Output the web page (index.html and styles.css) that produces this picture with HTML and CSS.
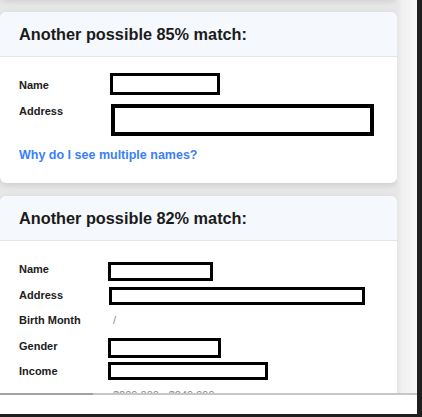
FILE: index.html
```html
<!DOCTYPE html>
<html lang="en">
<head>
<meta charset="utf-8">
<title>Matches</title>
<link rel="stylesheet" href="styles.css">
</head>
<body>
<div class="window">
  <div class="scroll">
    <div class="content">
      <div class="card card-prev"></div>

      <section class="card">
        <header class="card-head"><h2>Another possible 85% match:</h2></header>
        <div class="card-body">
          <div class="row">
            <span class="label">Name</span>
            <span class="value"><span class="redact r1-name"></span></span>
          </div>
          <div class="row">
            <span class="label">Address</span>
            <span class="value"><span class="redact r1-addr"></span></span>
          </div>
          <a class="why" href="#">Why do I see multiple names?</a>
        </div>
      </section>

      <section class="card">
        <header class="card-head"><h2>Another possible 82% match:</h2></header>
        <div class="card-body">
          <div class="row">
            <span class="label">Name</span>
            <span class="value"><span class="redact r2-name"></span></span>
          </div>
          <div class="row">
            <span class="label">Address</span>
            <span class="value"><span class="redact r2-addr"></span></span>
          </div>
          <div class="row">
            <span class="label">Birth Month</span>
            <span class="value muted">/</span>
          </div>
          <div class="row">
            <span class="label">Gender</span>
            <span class="value"><span class="redact r2-gender"></span></span>
          </div>
          <div class="row">
            <span class="label">Income</span>
            <span class="value"><span class="redact r2-income"></span></span>
          </div>
          <div class="row row-extra">
            <span class="label"></span>
            <span class="value muted">$200,000 - $249,999</span>
          </div>
        </div>
      </section>
    </div>
    <div class="gutter"></div>
  </div>
  <div class="hbar"><div class="hthumb"></div></div>
  <div class="bottom"></div>
</div>
</body>
</html>
```
FILE: styles.css
```css
* { box-sizing: border-box; }
html, body {
  margin: 0;
  padding: 0;
  width: 422px;
  height: 417px;
  overflow: hidden;
  background: #1f1f1f;
  font-family: "Liberation Sans", Arial, sans-serif;
}
.window {
  width: 417px;
  height: 414px;
  background: #ffffff;
  display: flex;
  flex-direction: column;
  overflow: hidden;
}
.scroll {
  height: 393px;
  display: flex;
  overflow: hidden;
  background: #e8e8e8;
  flex: none;
}
.content {
  width: 397px;
  flex: none;
  display: flex;
  flex-direction: column;
  gap: 13px;
  padding-top: 0;
}
.gutter {
  flex: 1;
  background: linear-gradient(to right, #e6e6e6 0px, #f1f1f1 6px, #f4f4f4 14px, #f7f7f7 20px);
}
.card {
  flex: none;
  background: #ffffff;
  border-radius: 6px;
  box-shadow: 0 2px 7px rgba(0, 0, 0, 0.13);
  overflow: hidden;
}
.card-prev {
  height: 40px;
  margin-top: -41px;
  margin-bottom: 0;
  border-radius: 0 0 6px 6px;
}
.card-head {
  height: 45px;
  background: #f5f8fd;
  border-bottom: 1px solid #e1e6ed;
  padding: 12px 0 0 19px;
}
.card-head h2 {
  margin: 0;
  font-size: 16.3px;
  line-height: 20px;
  font-weight: bold;
  color: #1b1b1b;
}
.card-body {
  padding: 16px 0 20px 19px;
}
.row {
  display: flex;
  height: 25.5px;
  line-height: 25.5px;
  font-size: 11px;
}
.label {
  width: 94px;
  flex: none;
  font-weight: bold;
  color: #202020;
}
.value {
  position: relative;
  flex: 1;
  color: #333;
}
.muted { color: #8a8a8a; }
.redact {
  position: absolute;
  border: 3px solid #000;
  background: #ffffff;
}
.r1-name { left: -3px; top: 0; width: 110px; height: 22px; }
.r1-addr { left: -2px; top: 5.5px; width: 263px; height: 32px; border-width: 4px; }
.r2-name { left: -5px; top: 4.5px; width: 105px; height: 19px; }
.r2-addr { left: -4px; top: 4px; width: 256px; height: 18px; }
.r2-gender { left: -5px; top: 4px; width: 113px; height: 20px; }
.r2-income { left: -5px; top: 2.5px; width: 160px; height: 18px; }
.row-extra { margin-top: -2px; }
.why {
  display: block;
  margin-top: 24px;
  font-size: 12.5px;
  line-height: 15px;
  font-weight: bold;
  color: #3b80f6;
  text-decoration: none;
}
.hbar {
  height: 2px;
  flex: none;
  background: #c6c6c6;
  display: flex;
}
.hthumb {
  width: 93px;
  background: #a2a2a2;
}
.bottom {
  flex: 1;
  background: #ffffff;
}
```
